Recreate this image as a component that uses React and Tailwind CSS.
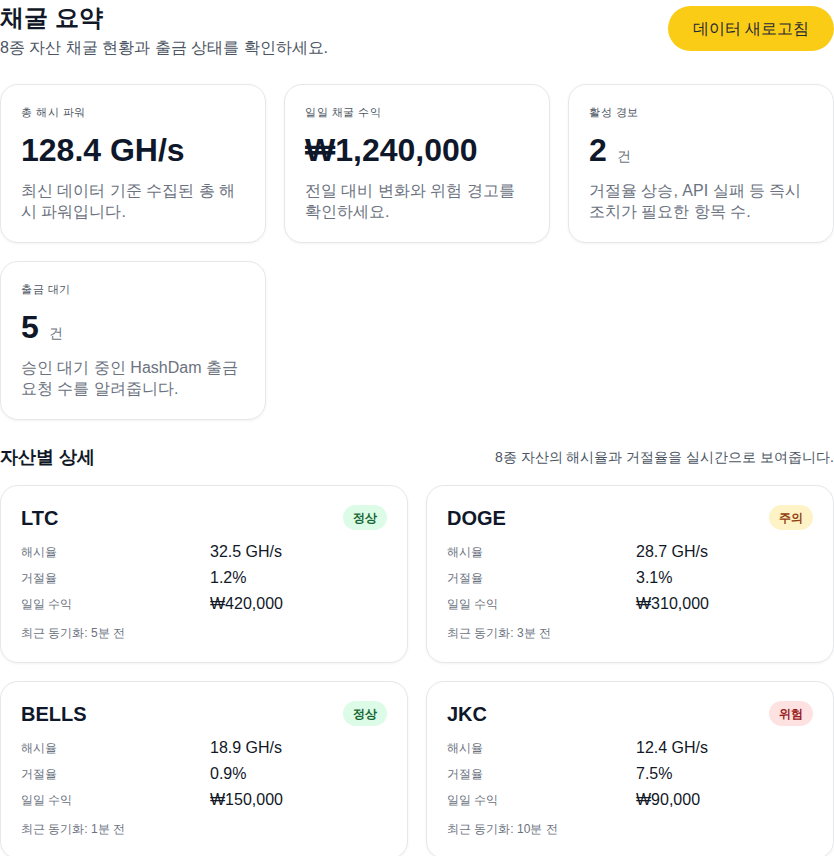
import React from 'react';

const summary = [
    { label: '총 해시 파워', value: '128.4 GH/s', desc: '최신 데이터 기준 수집된 총 해시 파워입니다.' },
    { label: '일일 채굴 수익', value: '₩1,240,000', desc: '전일 대비 변화와 위험 경고를 확인하세요.' },
    { label: '활성 경보', value: '2', unit: '건', desc: '거절율 상승, API 실패 등 즉시 조치가 필요한 항목 수.' },
    { label: '출금 대기', value: '5', unit: '건', desc: '승인 대기 중인 HashDam 출금 요청 수를 알려줍니다.' },
];

const assets = [
    { name: 'LTC', status: 'ok', hash: '32.5 GH/s', reject: '1.2%', revenue: '₩420,000', sync: '5분 전' },
    { name: 'DOGE', status: 'warn', hash: '28.7 GH/s', reject: '3.1%', revenue: '₩310,000', sync: '3분 전' },
    { name: 'BELLS', status: 'ok', hash: '18.9 GH/s', reject: '0.9%', revenue: '₩150,000', sync: '1분 전' },
    { name: 'JKC', status: 'danger', hash: '12.4 GH/s', reject: '7.5%', revenue: '₩90,000', sync: '10분 전' },
];

const badges = {
    ok: { text: '정상', cls: 'bg-[#dcfce7] text-[#166534]' },
    warn: { text: '주의', cls: 'bg-[#fef3c7] text-[#92400e]' },
    danger: { text: '위험', cls: 'bg-[#fee2e2] text-[#991b1b]' },
};

const SummaryCard = ({ item }) => (
    <div className="bg-white border border-[#e5e7eb] rounded-[18px] p-5 shadow-[0_1px_3px_rgba(15,23,42,0.05)]">
        <p className="text-[11px] leading-[14px] tracking-wider text-[#4b5563]">{item.label}</p>
        <div className="mt-3 flex items-baseline">
            <span className="text-[32px] leading-[38px] font-bold text-[#0f172a]">{item.value}</span>
            {item.unit && <span className="ml-2.5 text-[14px] text-[#6b7280]">{item.unit}</span>}
        </div>
        <p className="mt-[11px] text-[16px] leading-[21px] text-[#6b7280]">{item.desc}</p>
    </div>
);

const AssetCard = ({ asset }) => {
    const badge = badges[asset.status];
    const rows = [
        ['해시율', asset.hash],
        ['거절율', asset.reject],
        ['일일 수익', asset.revenue],
    ];
    return (
        <div className="bg-white border border-[#e5e7eb] rounded-[18px] px-5 pt-5 pb-[21px] shadow-[0_1px_3px_rgba(15,23,42,0.05)]">
            <div className="-mt-px flex justify-between items-center h-[25px]">
                <h3 className="text-[20px] font-bold text-[#0f172a]">{asset.name}</h3>
                <span className={`px-2.5 h-[25px] flex items-center rounded-full text-[12px] font-bold ${badge.cls}`}>
                    {badge.text}
                </span>
            </div>
            <div className="mt-[9px] grid grid-cols-2 gap-x-3">
                {rows.map(([label, value]) => (
                    <React.Fragment key={label}>
                        <span className="text-[12px] leading-[26px] text-[#6b7280]">{label}</span>
                        <span className="text-[16px] leading-[26px] text-[#111827]">{value}</span>
                    </React.Fragment>
                ))}
            </div>
            <p className="mt-2 text-[12px] leading-4 text-[#6b7280]">최근 동기화: {asset.sync}</p>
        </div>
    );
};

export default function App() {
    return (
        <div className="bg-white min-h-screen font-['Liberation_Sans',sans-serif]">
            <div className="flex justify-between items-start">
                <div>
                    <h1 className="text-[24px] leading-9 font-bold text-[#111827]">채굴 요약</h1>
                    <p className="text-[16px] leading-6 text-[#4b5563]">8종 자산 채굴 현황과 출금 상태를 확인하세요.</p>
                </div>
                <button className="mt-1.5 h-[45px] px-[25px] rounded-full bg-[#facc15] text-[16px] text-[#1f2937]">
                    데이터 새로고침
                </button>
            </div>

            <div className="mt-6 grid grid-cols-3 gap-[18px]">
                {summary.map((item) => (
                    <SummaryCard key={item.label} item={item} />
                ))}
            </div>

            <div className="mt-[23px] flex justify-between items-center">
                <h2 className="text-[18px] leading-7 font-bold text-[#111827]">자산별 상세</h2>
                <p className="text-[14px] text-[#4b5563]">8종 자산의 해시율과 거절율을 실시간으로 보여줍니다.</p>
            </div>

            <div className="mt-3.5 grid grid-cols-2 gap-[18px]">
                {assets.map((asset) => (
                    <AssetCard key={asset.name} asset={asset} />
                ))}
            </div>
        </div>
    );
}
